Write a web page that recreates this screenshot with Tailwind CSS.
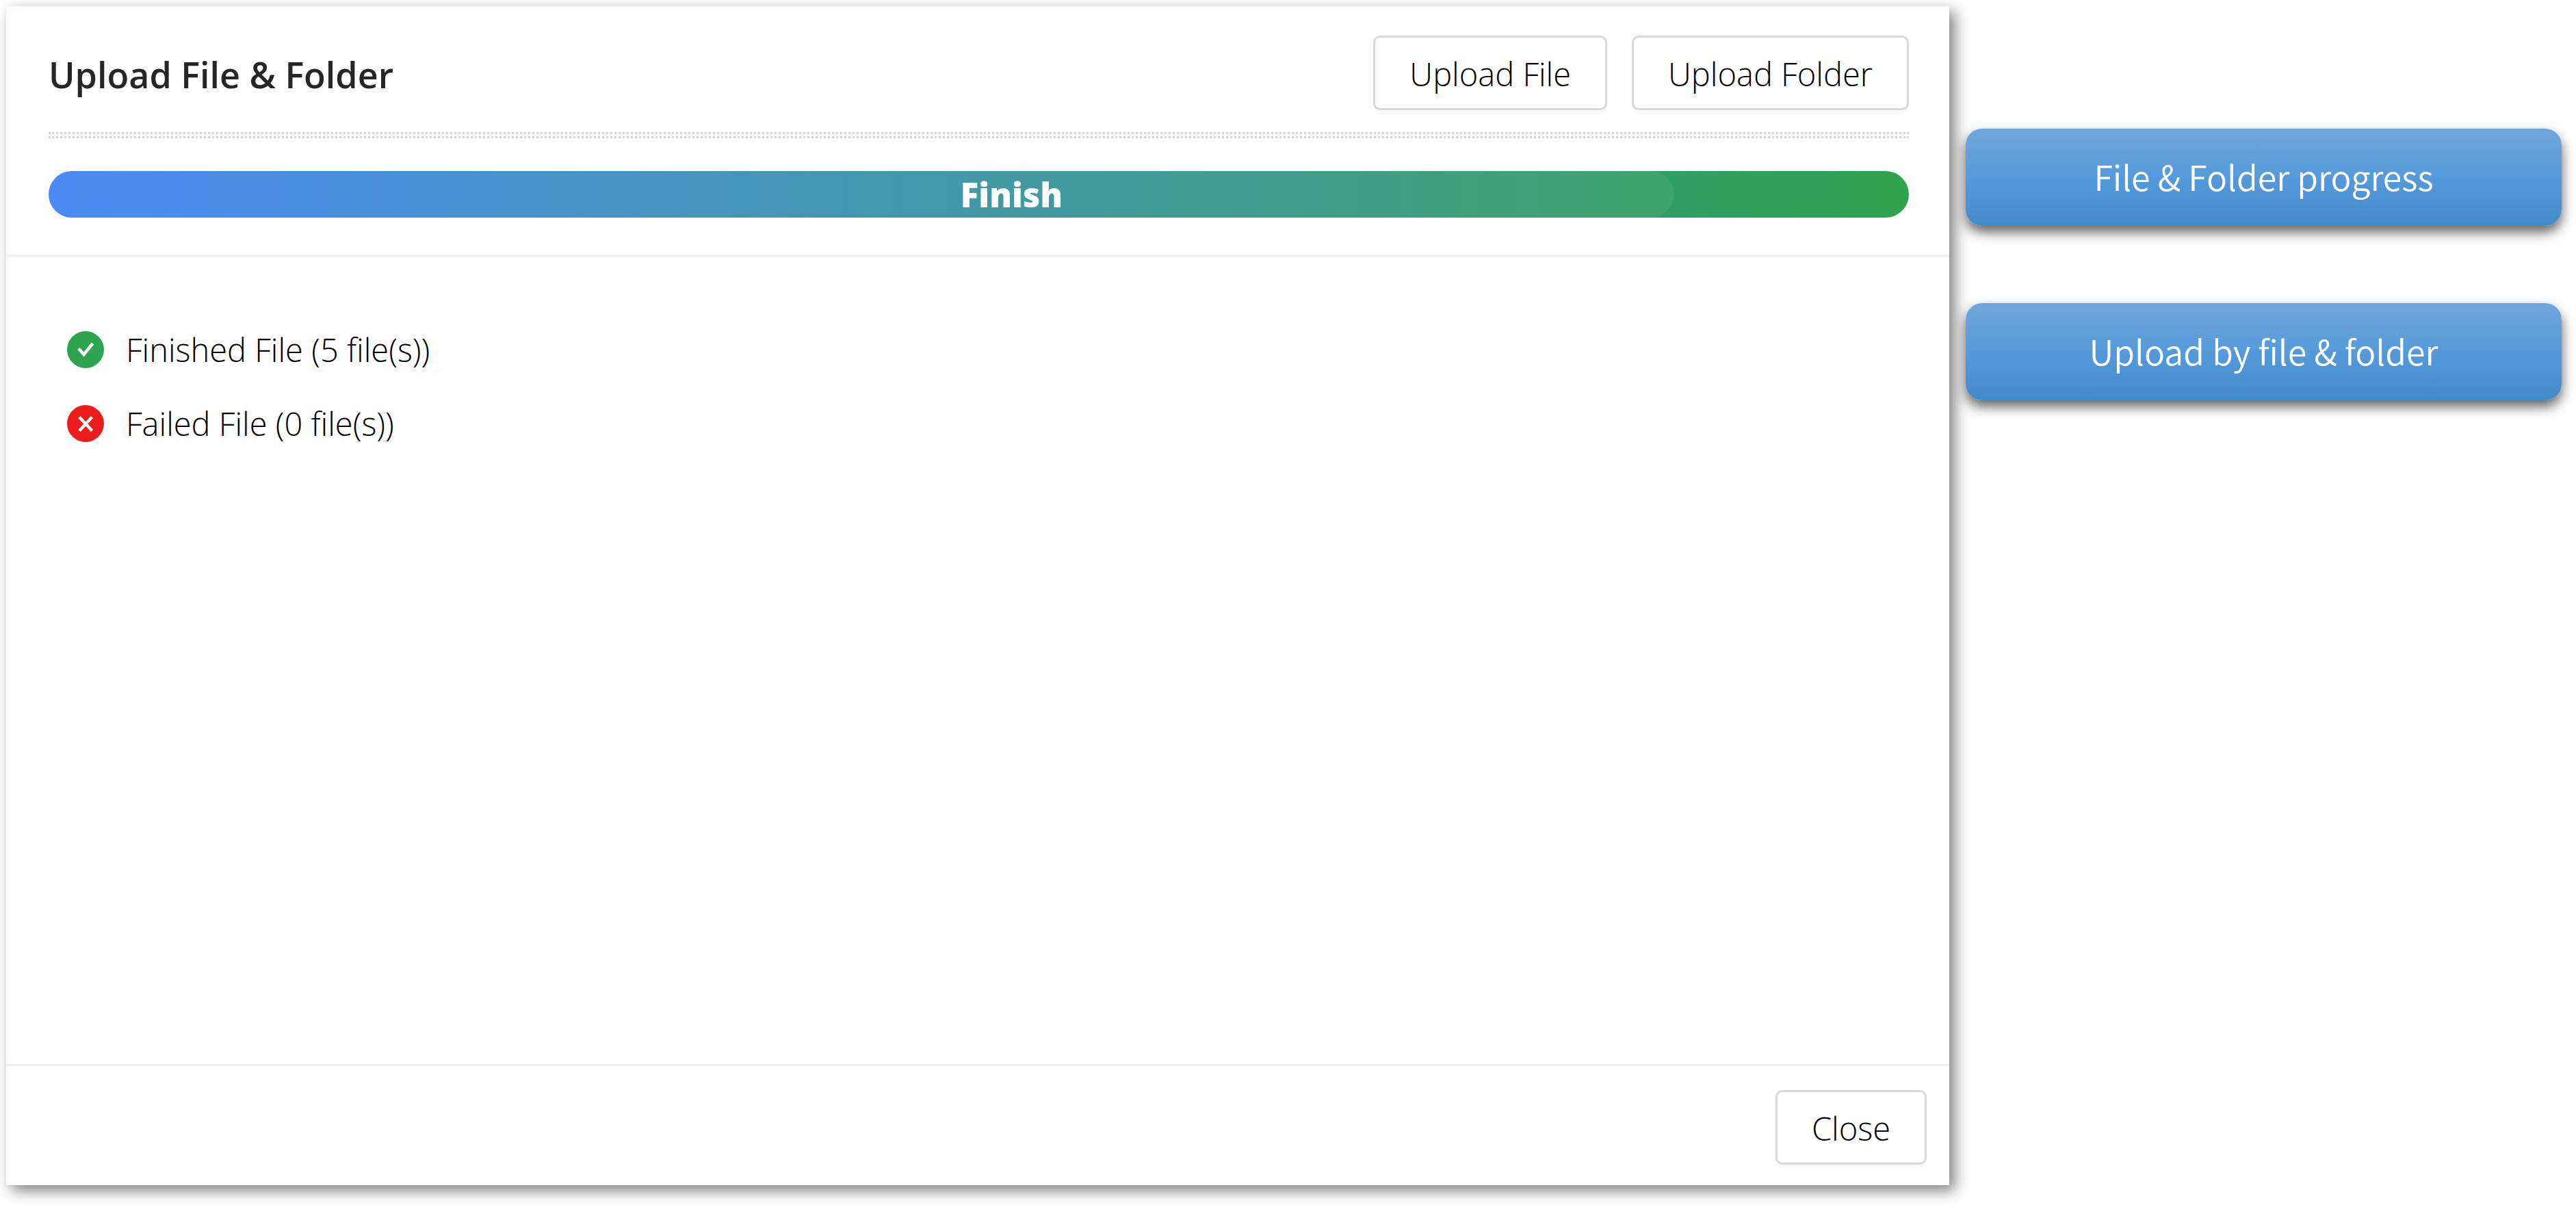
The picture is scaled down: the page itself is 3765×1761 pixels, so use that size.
<!DOCTYPE html>
<html lang="en">
<head>
  <meta charset="UTF-8" />
  <meta name="viewport" content="width=device-width, initial-scale=1.0"/>
  <title>Upload File &amp; Folder</title>
  <script src="https://cdn.jsdelivr.net/npm/@tailwindcss/browser@4"></script>
</head>
<body class="bg-white min-h-screen flex items-stretch gap-6 pl-[9px] pr-[21px] pt-[9px] pb-[29px] font-['Open_Sans',sans-serif] text-[#262626]">

  <!-- Upload dialog -->
  <main class="flex-1 flex flex-col bg-[#fefefe] shadow-[8px_8px_20px_rgba(0,0,0,0.5)]">
    <header class="pl-[62px] pr-[59px] pt-[43px] pb-[54px] border-b-4 border-[#f2f2f2]">
      <div class="flex items-center justify-between">
        <h1 class="text-[52px] leading-[60px] font-semibold pt-1">Upload File &amp; Folder</h1>
        <div class="flex gap-9">
          <button type="button" class="h-[109px] px-[50px] pt-0.5 border-3 border-[#d9d9d9] rounded-[10px] bg-white text-[47px] leading-[60px] font-light text-black shadow-[0_5px_0_rgba(0,0,0,0.015)]">Upload File</button>
          <button type="button" class="h-[109px] px-[50px] pt-0.5 border-3 border-[#d9d9d9] rounded-[10px] bg-white text-[47px] leading-[60px] font-light text-black shadow-[0_5px_0_rgba(0,0,0,0.015)]">Upload Folder</button>
        </div>
      </div>

      <div class="mt-8 h-[9px] border-y-3 border-dotted border-[#d6d6d6]"></div>

      <!-- Progress -->
      <div role="progressbar" aria-valuenow="100" aria-label="Upload progress" class="mt-12 h-[68px] rounded-full overflow-hidden bg-linear-to-r/srgb from-[#4083f4] to-[#2fa34e] grid">
        <div class="col-start-1 row-start-1 rounded-full bg-white/6" style="width: 87.4%"></div>
        <span class="col-start-1 row-start-1 self-center pl-24 text-center text-white text-[49px] leading-[60px] font-extrabold">Finish</span>
      </div>
    </header>

    <ul class="flex-1 pl-[89px] pt-[81px] text-[47px] leading-[60px] font-light text-black">
      <li class="h-[108px] flex items-center gap-8">
        <svg class="size-[54px]" viewBox="0 0 54 54" fill="none">
          <circle cx="27" cy="27" r="27" fill="#2ea44f"/>
          <path d="M17 25.500L24.500 34L37.500 18" stroke="#fff" stroke-width="4.500"/>
        </svg>
        <span>Finished File (5 file(s))</span>
      </li>
      <li class="h-[108px] flex items-center gap-8">
        <svg class="size-[54px]" viewBox="0 0 54 54" fill="none">
          <circle cx="27" cy="27" r="27" fill="#eb1c1c"/>
          <path d="M18 17.500L36.500 37.500M36.500 17.500L18 37.500" stroke="#fff" stroke-width="4.500"/>
        </svg>
        <span>Failed File (0 file(s))</span>
      </li>
    </ul>

    <footer class="flex justify-end pt-[35px] pb-[30px] pr-[33px] border-t-3 border-[#f0f0f0]">
      <button type="button" class="h-[109px] px-[50px] pt-0.5 border-3 border-[#d9d9d9] rounded-[10px] bg-white text-[47px] leading-[60px] font-light text-black shadow-[0_5px_0_rgba(0,0,0,0.015)]">Close</button>
    </footer>
  </main>

  <!-- Notes -->
  <aside class="w-[871px] shrink-0 flex flex-col gap-[113px] pt-[179px] text-white text-[50px] leading-[60px] font-[350] font-['Noto_Sans_CJK_KR',sans-serif] text-center">
    <p class="h-[142px] pb-1 flex items-center justify-center rounded-3xl bg-linear-to-b/srgb from-[#71a6db] via-[#559bdb] to-[#438ac9] shadow-[0_9px_18px_rgba(0,0,0,0.63)]">File &amp; Folder progress</p>
    <p class="h-[142px] pb-1 flex items-center justify-center rounded-3xl bg-linear-to-b/srgb from-[#71a6db] via-[#559bdb] to-[#438ac9] shadow-[0_9px_18px_rgba(0,0,0,0.63)]">Upload by file &amp; folder</p>
  </aside>

</body>
</html>
